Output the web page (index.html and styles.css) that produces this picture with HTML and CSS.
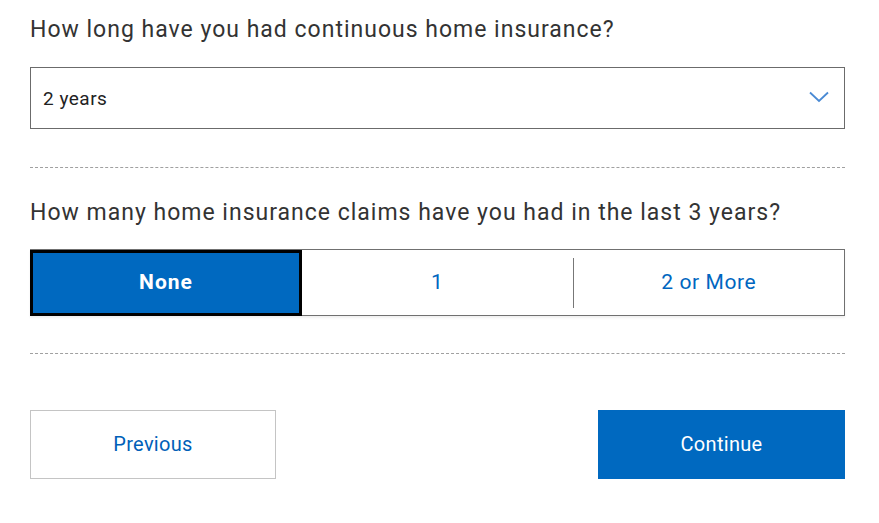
FILE: index.html
```html
<!DOCTYPE html>
<html>
<head>
<meta charset="utf-8">
<link rel="stylesheet" href="styles.css">
</head>
<body>
<div class="page">
  <section class="question">
    <h2 class="q-title">How long have you had continuous home insurance?</h2>
    <div class="select">
      <span class="select-value">2 years</span>
      <svg class="chevron" width="20" height="12" viewBox="0 0 20 12"><path d="M1 1.5 L10 10 L19 1.5" fill="none" stroke="#4a8ad4" stroke-width="1.8"/></svg>
    </div>
  </section>
  <hr class="divider">
  <section class="question">
    <h2 class="q-title">How many home insurance claims have you had in the last 3 years?</h2>
    <div class="segmented">
      <button class="seg seg-active">None</button>
      <button class="seg">1</button>
      <span class="seg-sep"></span>
      <button class="seg">2 or More</button>
    </div>
  </section>
  <hr class="divider divider-2">
  <div class="actions">
    <button class="btn btn-secondary">Previous</button>
    <button class="btn btn-primary">Continue</button>
  </div>
</div>
</body>
</html>
```
FILE: styles.css
```css
* { box-sizing: border-box; }
html, body { margin: 0; background: #fff; }
body { font-family: Roboto, "Noto Sans", Arial, sans-serif; color: #333; }
.page { width: 815px; margin-left: 30px; padding-top: 15px; }
.q-title { margin: 0; font-size: 23px; font-weight: 400; line-height: 30px; color: #333; letter-spacing: 1px; }
.select {
  margin-top: 22px;
  height: 62px;
  border: 1px solid #6b6b6b;
  display: flex; align-items: center; justify-content: space-between;
  padding: 0 15px 0 12px;
}
.select-value { font-size: 19px; color: #222; letter-spacing: 0.5px; }
.chevron { margin-top: -2px; }
.divider { margin: 38px 0 0; border: 0; border-top: 1px dashed #a0a0a0; height: 0; }
.divider + .question { margin-top: 30px; }
.segmented {
  margin-top: 21px;
  height: 67px;
  border: 1px solid #707070;
  display: flex; align-items: center;
  box-shadow: 0 2px 2px rgba(0,0,0,0.06);
}
.seg {
  flex: 1 1 0; height: 100%;
  border: 0; background: transparent;
  font-family: inherit; font-size: 21px; color: #0066c0;
  letter-spacing: 0.6px;
  padding: 0 0 2px;
}
.seg-active {
  flex: 0 0 272px;
  background: #0069c0; color: #fff; font-weight: 700;
  border: 3px solid #000;
  margin-left: -1px; height: 66px; margin-top: 1px;
  letter-spacing: 1px;
}
.seg-sep { width: 1px; height: 50px; background: #777; align-self: center; }
.divider-2 { margin-top: 37px; }
.actions { display: flex; justify-content: space-between; margin-top: 56px; }
.btn { height: 69px; font-family: inherit; font-size: 20px; padding: 0 0 2px; letter-spacing: 0.3px; }
.btn-secondary { background: #fff; border: 1px solid #c4c4c4; color: #0060b8; width: 246px; }
.btn-primary { background: #0069c0; border: 0; color: #fff; width: 247px; }
```
